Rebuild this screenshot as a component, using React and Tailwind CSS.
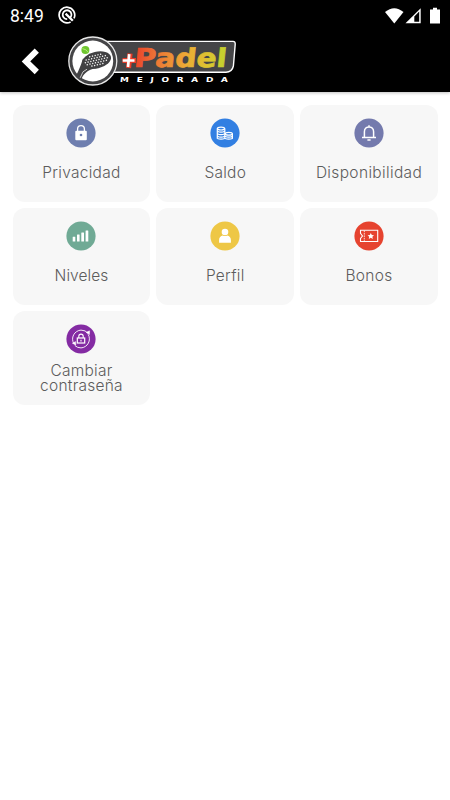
import React from "react";

function StatusBar() {
  return (
    <div className="flex h-[31px] items-center pl-[10px] pr-[9px] text-white">
      <span className="w-[48px] pt-px font-['Roboto',sans-serif] text-[17.5px] leading-[30px]">8:49</span>
      <svg className="mb-[2px] h-[18px] w-[18px]" viewBox="0 0 18 18" fill="none" stroke="white">
        <path d="M12.6 15.9A7.8 7.8 0 1 1 16 12.3" strokeWidth="1.7" />
        <path d="M12.2 11.8A4.4 4.4 0 1 0 9.2 13.1" strokeWidth="1.8" />
        <path d="M7.6 7.6L14.8 14.8" strokeWidth="2.3" />
      </svg>
      <svg className="ml-auto h-[18px] w-[56px]" viewBox="385 6 56 18">
        <path d="M385 11Q394.3 3.4 403.5 11L394.3 22.5Z" fill="white" />
        <path d="M405.5 22.3L420.7 7.2V22.3Z" fill="white" />
        <path d="M414.3 15.5L419.2 10.6V20.8H414.3Z" fill="black" />
        <path d="M433 6.8h4v1.8h3v14h-10v-14h3Z" fill="white" />
      </svg>
    </div>
  );
}

function Logo() {
  const holes = [];
  for (let r = 0; r < 5; r++) {
    for (let c = 0; c < 9; c++) {
      const x = -11.5 + c * 2.8 + (r % 2) * 1.4;
      const y = -4.8 + r * 2.4;
      if ((x / 12) ** 2 + (y / 6) ** 2 < 1) {
        holes.push(<circle key={`${r}-${c}`} cx={x} cy={y} r="0.75" />);
      }
    }
  }
  return (
    <svg className="h-[56px] w-[172px]" viewBox="66 34 172 56">
      <defs>
        <linearGradient id="brand" gradientUnits="userSpaceOnUse" x1="0" y1="0" x2="97" y2="0">
          <stop offset="0" stopColor="#ea422a" />
          <stop offset="0.2" stopColor="#ed7135" />
          <stop offset="0.53" stopColor="#edab35" />
          <stop offset="0.78" stopColor="#d9c630" />
          <stop offset="1" stopColor="#b8d52c" />
        </linearGradient>
      </defs>
      <path d="M106 41.4H233Q235.5 41.4 235.2 44.5L233.4 66Q232 72.2 226 72.2H106Z" fill="#454547" stroke="white" strokeWidth="1.4" />
      <circle cx="92.8" cy="61" r="24" fill="#454547" stroke="#e8e8e8" strokeWidth="1.3" />
      <circle cx="92.8" cy="61" r="20.4" fill="white" />
      <path d="M83 58.5C80.5 66 79.5 69 76.3 75L81.5 79.2C83.5 74 86.5 70 97 68Z" fill="#414143" />
      <path d="M80.2 77.8L83 71.8L87 69.2" fill="none" stroke="#eee" strokeWidth="0.8" />
      <g transform="translate(96.6 60.1) rotate(-13)">
        <ellipse rx="14.7" ry="8.3" fill="#414143" />
        <g fill="#f5f5f5">{holes}</g>
      </g>
      <circle cx="85.4" cy="50" r="4" fill="#6fc62f" />
      <path d="M82.4 48.6Q86.5 49.2 88.2 52.4" stroke="#b5ec7b" strokeWidth="0.9" fill="none" />
      <g transform="translate(133.5 67.4) skewX(-6)" fill="url(#brand)" stroke="url(#brand)" strokeWidth="0.7">
        <text textLength="92.5" lengthAdjust="spacingAndGlyphs" fontFamily="'DejaVu Sans', sans-serif" fontWeight="700" fontSize="26">Padel</text>
      </g>
      <path d="M122.5 60.5H136M130 53.5L128.5 68" stroke="#e73d29" strokeWidth="5.2" />
      <path d="M122.7 60.5H134.5M129.2 54.2L128 67" stroke="white" strokeWidth="2.7" />
      <g transform="translate(119.8 81.6) skewX(-5) scale(1.3 1)" fill="white">
        <text textLength="83" lengthAdjust="spacing" fontFamily="'DejaVu Sans', sans-serif" fontWeight="700" fontSize="6.9">MEJORADA</text>
      </g>
    </svg>
  );
}

const icons = {
  lock: (
    <>
      <path d="M11.6 13V11a3.4 3.4 0 0 1 6.8 0V13" fill="none" stroke="white" strokeWidth="1.3" />
      <rect x="9.3" y="12.7" width="11.5" height="9.6" rx="1" fill="white" />
      <circle cx="15" cy="17" r="1.3" fill="#6e7eaf" />
    </>
  ),
  coins: (
    <g fill="none" stroke="white" strokeWidth="1.2">
      <ellipse cx="11" cy="10.6" rx="3.6" ry="1.4" />
      <path d="M7.3 10.6v10.2M14.8 10.6v10.2" />
      <path d="M7.3 13.2q3.7 1.8 7.5 0M7.3 15.8q3.7 1.8 7.5 0M7.3 18.2q3.7 1.8 7.5 0M7.3 20.5q3.7 1.3 7.5 0" />
      <ellipse cx="18.8" cy="15.7" rx="3.6" ry="1.4" />
      <path d="M15 18.2q3.7 1.8 7.5 0M15 20.5q3.7 1.3 7.5 0M22.4 15.7v5.1" />
    </g>
  ),
  bell: (
    <g fill="none" stroke="white" strokeWidth="1.5">
      <path d="M8 19.6h14M10.4 19.2v-5.5c0-6.3 9.2-6.3 9.2 0v5.5M15 7.2v2M13.4 22.1h3.2" />
    </g>
  ),
  bars: (
    <g fill="white">
      <rect x="6.7" y="15.8" width="2.6" height="4.8" rx="0.3" />
      <rect x="11" y="13.6" width="2.6" height="7" rx="0.3" />
      <rect x="15.3" y="11.6" width="2.7" height="9" rx="0.3" />
      <rect x="19.6" y="9.6" width="2.7" height="11" rx="0.3" />
    </g>
  ),
  person: (
    <g fill="white">
      <circle cx="15" cy="11" r="3.3" />
      <path d="M9.1 21.7v-2.8c0-2.6 1.5-4.2 3.7-4.5q2.2 1 4.4 0c2.2.3 3.7 1.9 3.7 4.5v2.8Z" />
    </g>
  ),
  ticket: (
    <>
      <path d="M6.5 9.3h17.2v11.2H6.5v-3l2-2.5-2-2.6Z" fill="none" stroke="white" strokeWidth="1.1" />
      <path d="M10.3 9.6v10.8" stroke="white" strokeWidth="0.8" strokeDasharray="1.6 0.8" />
      <path d="m16.8 11.9 1 2 2.2.3-1.6 1.5.4 2.2-2-1.1-2 1.1.4-2.2-1.6-1.5 2.2-.3Z" fill="white" />
    </>
  ),
  reset: (
    <g fill="none" stroke="white" strokeWidth="0.9">
      <path d="M7.8 19.6A9 9 0 0 1 15 6.1a9 9 0 0 1 7.2 3.4M22.2 10.4A9 9 0 0 1 15 23.9a9 9 0 0 1-6.2-2.4" />
      <path d="m6.3 19.2 3.6 2-.3-3.6ZM20.1 8.3l3.4 2.2.1-3.7Z" fill="white" strokeWidth="0.4" />
      <rect x="11.3" y="14" width="7.4" height="5" strokeWidth="1.2" />
      <path d="M12.8 14v-1.7a2.2 2.2 0 0 1 4.4 0V14M15 15.7v1.7" strokeWidth="1.1" />
    </g>
  ),
};

const items = [
  { label: "Privacidad", icon: "lock", color: "#6e7eaf", text: "tracking-[0.28px]" },
  { label: "Saldo", icon: "coins", color: "#327fe2", text: "tracking-[0.25px]" },
  { label: "Disponibilidad", icon: "bell", color: "#747aad", text: "tracking-[0.35px]" },
  { label: "Niveles", icon: "bars", color: "#70aa95", text: "tracking-[0.05px]" },
  { label: "Perfil", icon: "person", color: "#eec746", text: "tracking-[0.25px]" },
  { label: "Bonos", icon: "ticket", color: "#e6432f", text: "tracking-[0.3px]" },
];

function Badge({ icon, color }) {
  return (
    <svg className="h-[30px] w-[30px] shrink-0" viewBox="0 0 30 30">
      <circle cx="15" cy="15" r="14.6" fill={color} />
      {icons[icon]}
    </svg>
  );
}

export default function App() {
  return (
    <div className="h-[800px] w-[450px] overflow-hidden bg-white">
      <header className="h-[92px] bg-black shadow-[0_1px_3px_rgba(0,0,0,0.25)]">
        <StatusBar />
        <div className="flex items-start pl-[21px] pt-[3px]">
          <svg className="mt-[14px] h-[27px] w-[20px]" viewBox="0 0 20 27">
            <path d="M15.8 2.7L5 13.4L15.8 24" fill="none" stroke="white" strokeWidth="6" />
          </svg>
          <div className="ml-[25px]"><Logo /></div>
        </div>
      </header>
      <main className="grid grid-cols-[137.5px_137.5px_137.5px] gap-x-[6.3px] gap-y-[6px] px-[12.7px] pt-[13px] font-['Inter','Liberation_Sans',sans-serif] text-[15.5px] font-light leading-[15px] text-[#5c5c5c]">
        {items.map((item) => (
          <button key={item.label} className="flex h-[97px] flex-col items-center rounded-[12px] bg-[#f7f7f7] pt-[12.5px]">
            <Badge icon={item.icon} color={item.color} />
            <span className={`mt-[17px] ${item.text}`}>{item.label}</span>
          </button>
        ))}
        <button className="flex h-[94px] flex-col items-center rounded-[12px] bg-[#f7f7f7] pt-[12.5px]">
          <Badge icon="reset" color="#842ba3" />
          <span className="mt-[9px] tracking-[0.25px]">Cambiar<br />contraseña</span>
        </button>
      </main>
    </div>
  );
}
